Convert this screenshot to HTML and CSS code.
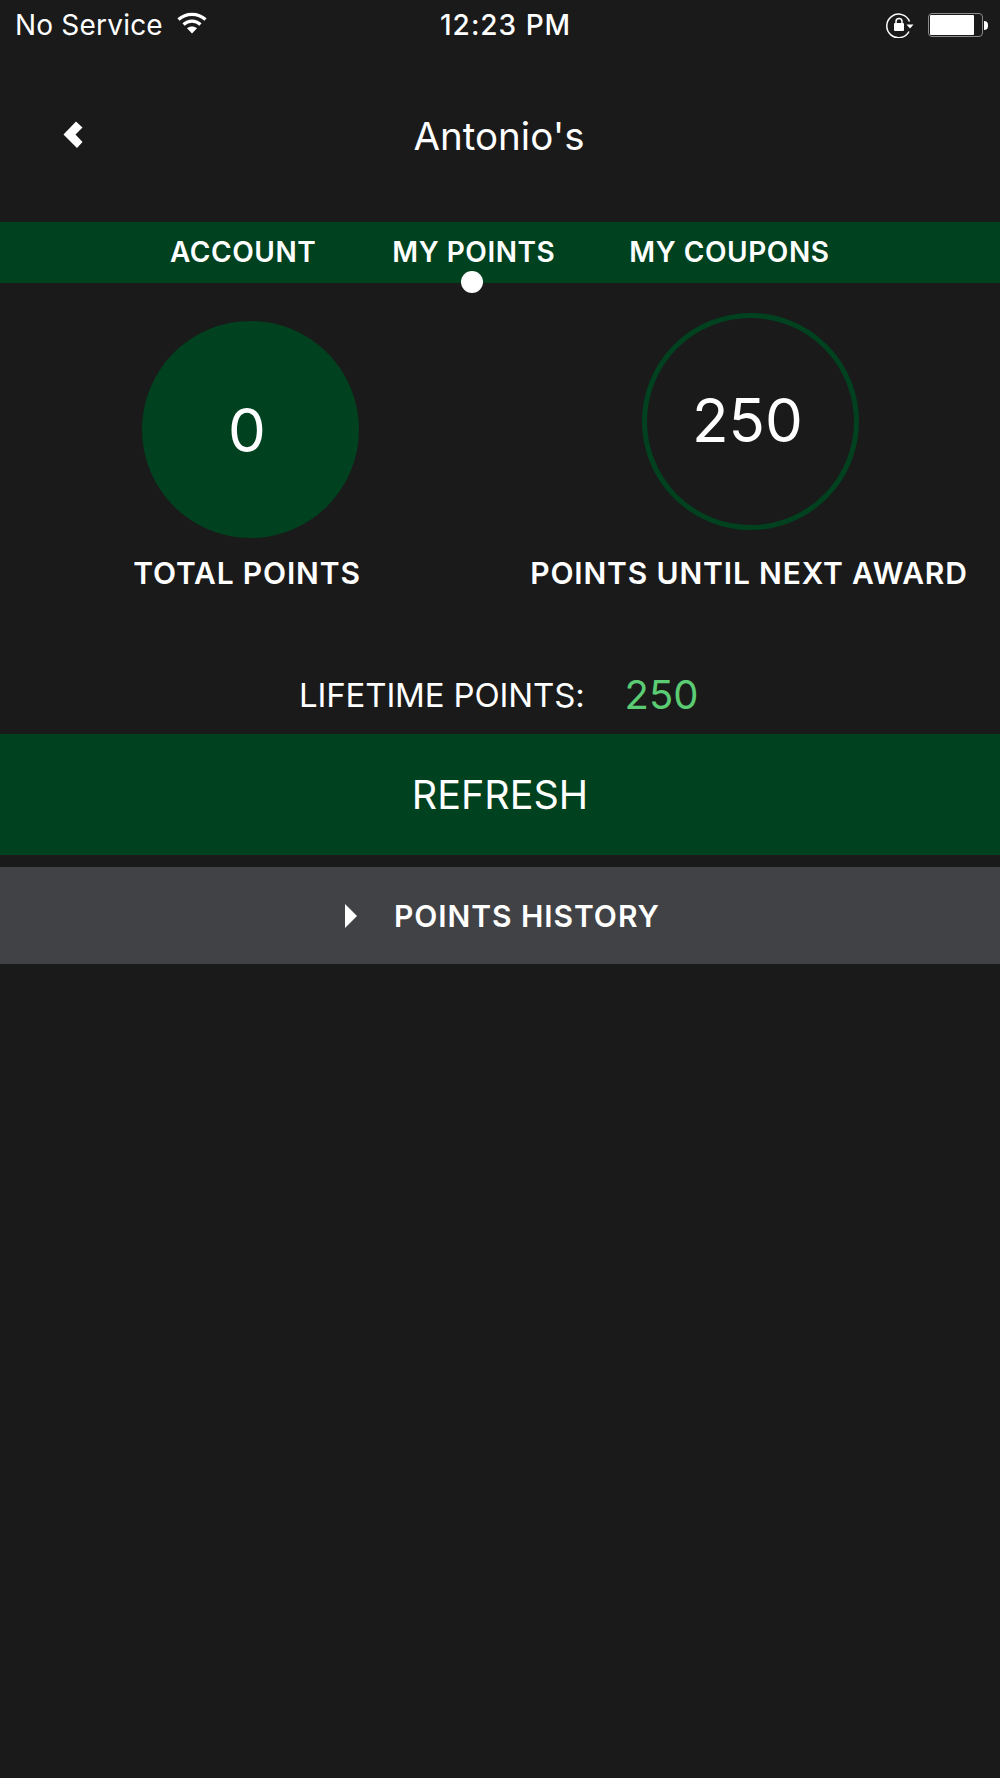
FILE: index.html
```html
<!DOCTYPE html>
<html lang="en">
<head>
    <meta charset="UTF-8">
    <title>Antonio's</title>
    <link rel="stylesheet" href="styles.css">
</head>
<body>
    <div class="status">
        <div class="status-left">
            <span class="carrier">No Service</span>
            <svg class="wifi" width="30" height="22" viewBox="0 0 30 22">
                <path d="M1.5 7.5C9 .6 21 .6 28.5 7.5" fill="none" stroke="#fff" stroke-width="3.2"/>
                <path d="M6.5 12.5C11.5 8 18.5 8 23.500 12.500" fill="none" stroke="#fff" stroke-width="3.2"/>
                <path d="M10 16.200C13 14 17 14 20 16.200L15 21.500Z" fill="#fff"/>
            </svg>
        </div>
        <span class="clock">12:23 PM</span>
        <div class="status-right">
            <svg class="lock" width="28" height="26" viewBox="0 0 28 26">
                <path d="M23 19.500A11.800 11.800 0 1 1 23.500 9.500" fill="none" stroke="#fff" stroke-width="1.500"/>
                <path d="M20.500 12.500H27.500L24 16.500Z" fill="#fff"/>
                <path d="M10 11.500V9.500A3 3 0 0 1 16 9.500V11.500" fill="none" stroke="#fff" stroke-width="1.500"/>
                <rect x="8" y="11" width="10" height="8" rx="1" fill="#fff"/>
            </svg>
            <div class="battery"><div class="battery-level"></div></div>
            <div class="battery-tip"></div>
        </div>
    </div>

    <div class="title-bar">
        <svg class="back" width="20" height="28" viewBox="0 0 20 28">
            <path d="M13 0.500L19.500 6.500L12.500 13.500L19.500 21L14 27L0.500 13.500Z" fill="#fff"/>
        </svg>
        <h1>Antonio's</h1>
    </div>

    <ul class="tabs">
        <li>ACCOUNT</li>
        <li class="active">MY POINTS</li>
        <li>MY COUPONS</li>
    </ul>

    <div class="stats">
        <div class="stat">
            <div class="circle filled"><span>0</span></div>
            <p>TOTAL POINTS</p>
        </div>
        <div class="stat">
            <div class="circle outline"><span>250</span></div>
            <p>POINTS UNTIL NEXT AWARD</p>
        </div>
    </div>

    <div class="lifetime">
        <span class="lifetime-label">LIFETIME POINTS:</span>
        <span class="lifetime-value">250</span>
    </div>

    <div class="refresh">REFRESH</div>

    <div class="history">
        <svg class="arrow" width="12" height="24" viewBox="0 0 12 24">
            <path d="M0 0L12 12L0 24Z" fill="#fff"/>
        </svg>
        <span>POINTS HISTORY</span>
    </div>
</body>
</html>
```

FILE: styles.css
```css
* {
    margin: 0;
    padding: 0;
    list-style: none;
    box-sizing: border-box;
}
html, body {
    height: 100%;
}
body {
    background: #1a1a1a;
    color: #fff;
    font-family: "Inter", "Liberation Sans", sans-serif;
    font-weight: 375;
}

/* status bar */
.status {
    height: 50px;
    padding: 0 12px 0 15px;
    display: flex;
    justify-content: space-between;
    align-items: center;
    position: relative;
}
.status-left {
    display: flex;
    align-items: center;
    gap: 14px;
}
.carrier {
    font-size: 28px;
    letter-spacing: 0.2px;
}
.wifi {
    margin-top: -5px;
}
.clock {
    font-size: 28px;
    font-weight: 500;
    letter-spacing: 1px;
    position: absolute;
    left: 440px;
}
.status-right {
    display: flex;
    align-items: center;
}
.lock {
    margin-right: 14px;
}
.battery {
    width: 55px;
    height: 24px;
    border: 1.5px solid #8a8a8a;
    border-radius: 4px;
    padding: 1px;
}
.battery-level {
    width: 44px;
    height: 100%;
    background: #fff;
    border-radius: 1px;
}
.battery-tip {
    width: 4px;
    height: 9px;
    margin-left: 1px;
    background: #fff;
    border-radius: 0 4px 4px 0;
}

/* title */
.title-bar {
    height: 172px;
    display: flex;
    align-items: center;
    justify-content: center;
    position: relative;
}
.title-bar h1 {
    font-size: 38.5px;
    font-weight: 375;
    margin: -1px 2px 0 0;
}
.back {
    position: absolute;
    left: 63px;
    top: 71px;
}

/* tabs */
.tabs {
    height: 61px;
    background: #00421f;
    display: flex;
    padding-left: 170px;
    gap: 74px;
    align-items: center;
    font-size: 28px;
    font-weight: 600;
    letter-spacing: 0.55px;
}
.tabs li {
    position: relative;
    margin-top: -1px;
}
.tabs li.active {
    margin-left: 2px;
}
.tabs li.active:after {
    content: "";
    position: absolute;
    left: 69px;
    top: 36px;
    width: 22px;
    height: 22px;
    border-radius: 50%;
    background: #fff;
}

/* circles */
.stats {
    display: grid;
    grid-template-columns: 494px 498px;
    gap: 6px;
    height: 330px;
}
.stat {
    display: flex;
    flex-direction: column;
    align-items: center;
}
.stat p {
    font-size: 30px;
    font-weight: 600;
    letter-spacing: 0.85px;
    white-space: nowrap;
}
.circle {
    width: 217px;
    height: 217px;
    border-radius: 50%;
    display: flex;
    align-items: center;
    justify-content: center;
    font-size: 60px;
}
.filled {
    background: #00421f;
    margin: 38px 0 17px 6px;
}
.filled span {
    margin-right: 6px;
}
.outline {
    border: 5px solid #00421f;
    margin: 30px 0 25px 2px;
}
.outline span {
    margin: -3px 5px 0 0;
}

/* lifetime */
.lifetime {
    height: 121px;
    padding: 42px 0 0 299px;
    display: flex;
    align-items: center;
    gap: 40px;
}
.lifetime-label {
    font-size: 33px;
    letter-spacing: -0.15px;
}
.lifetime-value {
    font-size: 40px;
    color: #5bcc74;
}

/* buttons */
.refresh {
    height: 121px;
    background: #00421f;
    display: flex;
    align-items: center;
    justify-content: center;
    font-size: 39.5px;
}
.history {
    height: 97px;
    margin-top: 12px;
    background: #414246;
    display: flex;
    align-items: center;
    padding-left: 345px;
    gap: 37px;
    font-size: 30px;
    font-weight: 600;
    letter-spacing: 0.95px;
}
```
